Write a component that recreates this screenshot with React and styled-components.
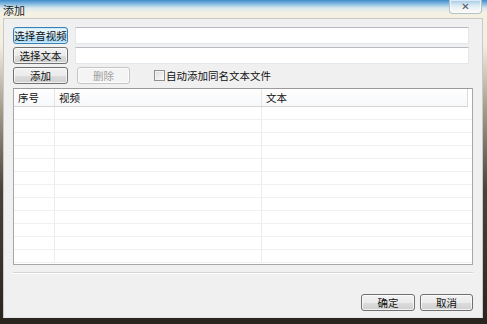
import React from "react";
import styled, { createGlobalStyle } from "styled-components";

const Global = createGlobalStyle`
  html, body { margin: 0; padding: 0; width: 487px; height: 324px; overflow: hidden; background: #201c18; }
  * { box-sizing: border-box; }
  body { font-family: "Noto Sans CJK SC", "Noto Sans", sans-serif; font-size: 10.5px; }
`;

const Window = styled.div`
  width: 487px;
  height: 324px;
  display: flex;
  flex-direction: column;
  background: linear-gradient(180deg, #3c8cca 0px, #86bbe0 4px, #d9e8ee 8px, #f5f1e2 13px, #f2eee0 45px, #a39b8a 110px, #4a4238 190px, #2a241e 100%);
`;

const TitleBar = styled.div`
  height: 19px;
  display: flex;
  justify-content: space-between;
  align-items: flex-start;
  padding: 0 5px 0 3px;
`;

const Title = styled.span`
  margin-top: 3px;
  font-size: 11px;
  line-height: 14px;
  color: #1a1a1a;
`;

const CloseButton = styled.div`
  width: 33px;
  height: 14px;
  border: 1px solid #b4c0c8;
  border-top: none;
  border-radius: 0 0 4px 4px;
  background: linear-gradient(180deg, rgba(220,235,245,0.6), rgba(250,250,248,0.95));
  box-shadow: inset 0 0 0 1px rgba(255,255,255,0.6);
  display: flex;
  align-items: center;
  justify-content: center;
  color: #4c5560;
  font-size: 10px;
  line-height: 10px;
  font-family: "DejaVu Sans", sans-serif;
  font-weight: bold;
`;

const Client = styled.div`
  flex: 1;
  margin: 0 4px 6px 3px;
  border: 1px solid #c9c9c9;
  border-bottom-color: #e8e8e8;
  background: #f0f0f0;
  padding: 8px 9px 6px 9px;
  display: flex;
  flex-direction: column;
`;

const Row = styled.div`
  display: flex;
  align-items: center;
  height: 17px;
  margin-bottom: 3px;
`;

const Button = styled.button`
  width: ${(p) => p.$w || 55}px;
  height: 17px;
  padding: 0;
  margin: 0;
  margin-right: ${(p) => p.$mr || 0}px;
  font-family: inherit;
  font-size: 10.5px;
  line-height: 15px;
  border-radius: 3px;
  color: ${(p) => (p.$disabled ? "#a0a0a0" : "#111")};
  border: 1px solid ${(p) => (p.$focus ? "#3c7fb1" : p.$disabled ? "#c3c6c8" : "#707070")};
  background: ${(p) =>
    p.$focus
      ? "linear-gradient(180deg, #eaf6fd 0%, #d9f0fc 50%, #bee6fd 51%, #a7d9f5 100%)"
      : p.$disabled
      ? "#f4f4f4"
      : "linear-gradient(180deg, #f2f2f2 0%, #ebebeb 50%, #dddddd 51%, #cfcfcf 100%)"};
  box-shadow: ${(p) => (p.$focus ? "inset 0 0 0 1px #c8ecfb" : "inset 0 0 0 1px rgba(255,255,255,0.7)")};
`;

const Input = styled.div`
  flex: 1;
  height: 17px;
  margin-left: 7px;
  margin-right: 4px;
  background: #fff;
  border: 1px solid #e2e7ec;
  border-top-color: #b7bbc1;
`;

const CheckWrap = styled.label`
  display: flex;
  align-items: center;
  margin-left: 24px;
  color: #111;
  font-size: 10.5px;
`;

const Box = styled.span`
  width: 11px;
  height: 11px;
  margin-right: 1px;
  border: 1px solid #8f8f8f;
  background: linear-gradient(135deg, #dcdcdc, #fbfbfb);
  box-shadow: inset 0 0 0 1px #f4f4f4;
`;

const Table = styled.div`
  margin-top: 1px;
  height: 177px;
  border: 1px solid #a8a8a8;
  border-top-color: #9b9b9b;
  background: #fff;
  display: flex;
  flex-direction: column;
  overflow: hidden;
`;

const Header = styled.div`
  display: grid;
  grid-template-columns: 41px 207px 1fr;
  height: 18px;
  margin-right: 4px;
  background: linear-gradient(180deg, #ffffff 0%, #f7f8fa 100%);
  border-bottom: 1px solid #d5d5d5;
  border-right: 1px solid #dcdcdc;
`;

const HeadCell = styled.div`
  padding-left: 4px;
  font-size: 10.5px;
  line-height: 17px;
  color: #111;
  border-right: 1px solid ${(p) => (p.$last ? "transparent" : "#e5e5e5")};
`;

const BodyRow = styled.div`
  display: grid;
  grid-template-columns: 41px 207px 1fr;
  height: 13px;
  flex-shrink: 0;
  border-bottom: 1px solid #f0f0f0;
`;

const Cell = styled.div`
  border-right: 1px solid ${(p) => (p.$last ? "transparent" : "#ececec")};
`;

const Separator = styled.div`
  margin-top: 7px;
  height: 2px;
  border-top: 1px solid #d5d5d5;
  border-bottom: 1px solid #ffffff;
`;

const Footer = styled.div`
  margin-top: 20px;
  display: flex;
  justify-content: flex-end;
  gap: 5px;
`;

export default function App() {
  const rows = Array.from({ length: 12 });
  return (
    <>
      <Global />
      <Window>
        <TitleBar>
          <Title>添加</Title>
          <CloseButton>✕</CloseButton>
        </TitleBar>
        <Client>
          <Row>
            <Button $focus>选择音视频</Button>
            <Input />
          </Row>
          <Row>
            <Button>选择文本</Button>
            <Input />
          </Row>
          <Row>
            <Button $mr={9}>添加</Button>
            <Button $disabled $w={53}>删除</Button>
            <CheckWrap>
              <Box />
              自动添加同名文本文件
            </CheckWrap>
          </Row>
          <Table>
            <Header>
              <HeadCell>序号</HeadCell>
              <HeadCell>视频</HeadCell>
              <HeadCell $last>文本</HeadCell>
            </Header>
            {rows.map((_, i) => (
              <BodyRow key={i}>
                <Cell />
                <Cell />
                <Cell $last />
              </BodyRow>
            ))}
          </Table>
          <Separator />
          <Footer>
            <Button $w={54}>确定</Button>
            <Button $w={53}>取消</Button>
          </Footer>
        </Client>
      </Window>
    </>
  );
}
